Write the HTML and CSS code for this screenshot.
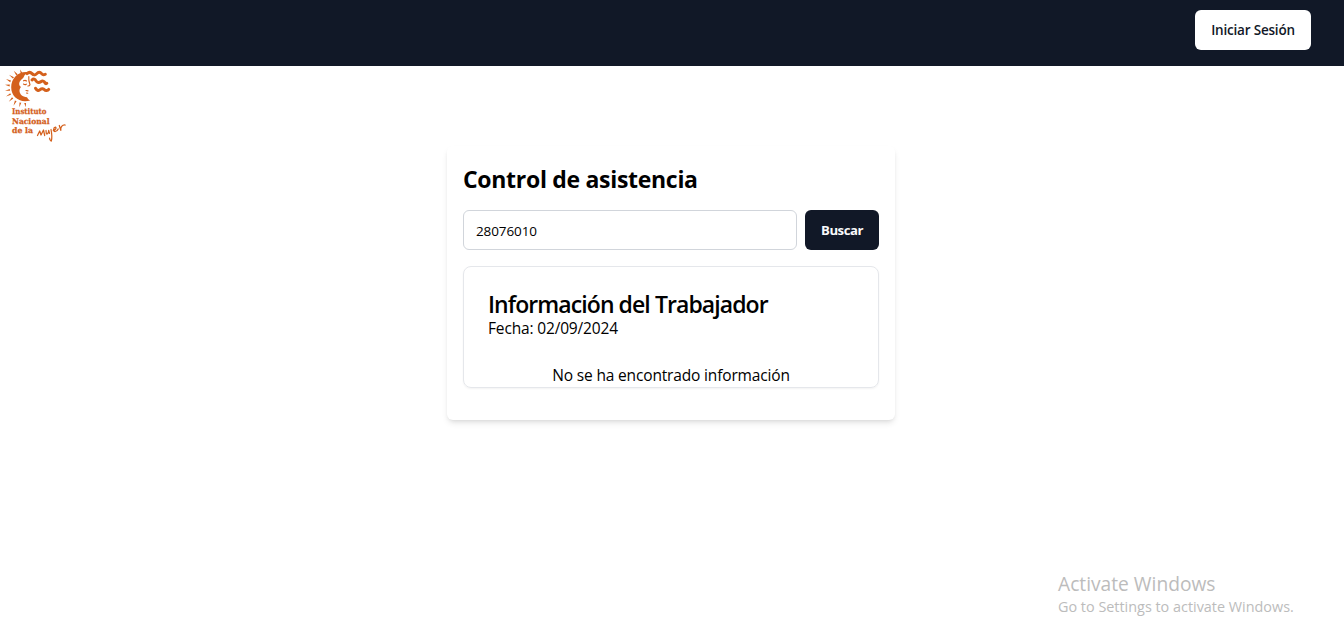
FILE: index.html
```html
<!DOCTYPE html>
<html lang="es">
<head>
<meta charset="utf-8">
<title>Control de asistencia</title>
<link rel="stylesheet" href="styles.css">
</head>
<body>
<header class="topbar"><button class="btn btn-light"><span class="login-label">Iniciar Sesión</span></button></header>
<main class="page">
  <svg class="logo" width="70" height="80" viewBox="0 0 70 80" role="img" aria-label="Instituto Nacional de la Mujer">
    <path fill="#d4601c" d="M20 3.500l2.500 3.500-1.800.6zM13.700 4.800l4 3.500-1.500 1zM9 8.800l5 2.400-1.200 1.400zM6 13l5 1.600-.8 1.600zM5 18.700l4.800-.2-.2 1.900zM5 24.800l4.800-1.800.2 1.800zM6 30.500l4.200-3.300.8 1.600zM8.800 35.700l3.200-4.500 1.300 1.300zM13.500 39.700l1.400-5.200 1.700.8zM19.300 41.300l.2-4.900 1.800.3zM25.800 41.300l-1.600-4.300 1.800-.1z"/>
    <path fill="none" stroke="#d4601c" stroke-linecap="round" stroke-width="3" d="M27 7.600c2-1.800 3.500-1.600 5 0s3.300 1.800 4.800 0 3.300-1.800 4.800 0 2.500 1.300 3.700.6M32 14c1.500-1.600 3-1 4 .9s3.200 2 4.800.8 3.300-.7 4 .8 1.200 1.300 2 .8M35.500 22.300c1.500 2.700 3.400 2.800 4.800 1.300s3.200-1 4.200.2 3.200 1 4.200-.4"/>
    <path fill="#d4601c" d="M29 6.400C19 4.500 11.200 12 11.200 21.300c0 9.500 8.300 16.200 19.100 13.200-1.500-.6-2.600-1.800-3.300-3.200-4.500-.3-7.500-3.200-7.500-6.500 0-1.700.6-2.700 1.500-3.800-2-1.200-2.300-3.800-1.200-5.600 1-2 3.500-2.500 4.200-4.900.4-1.800 2.400-3.200 5-4.100z"/>
    <path fill="none" stroke="#d4601c" stroke-width="1.100" stroke-linecap="round" d="M23.500 14.800c1.200-.7 2.300-.5 3 .2M23.500 18c1 .8 2 .8 2.800.2M28.800 10.500c-.4 3.500.2 5.700 1.200 8.200-.4 1-1.200 1.300-2.100 1.300M26 24.500l2 .4M26.500 27l1.300.2"/>
    <g fill="#d4601c" class="logo-text">
      <text x="12" y="48" textLength="34.500" lengthAdjust="spacingAndGlyphs">Instituto</text>
      <text x="12" y="57.500" textLength="37.500" lengthAdjust="spacingAndGlyphs">Nacional</text>
      <text x="12" y="67" textLength="21" lengthAdjust="spacingAndGlyphs">de la</text>
    </g>
    <path fill="none" stroke="#d4601c" stroke-width="1.250" stroke-linecap="round" stroke-linejoin="round" d="M37.500 69.500l2.200-4.500 1.300 4 2.500-5 1.200 5.500M46 64.500l.3 3.200c1.200 1 2.200-.7 2.400-3.400l.8 3M51 63.500c.9 4.500 1.200 8.500.3 11.700-1-.7-1.800-2-1.800-3.200M53.300 64.500c2.300-.5 3.400-2.800 2.200-3.300-2.200.3-2.800 4.300-.3 4.300 1.500-.2 2.500-1.200 3-2.500M59.300 59.500l1.500 4.800c-.4-3.200 1.200-5.500 4.400-5.300"/>
  </svg>
  <section class="panel">
    <h1 class="panel-title">Control de asistencia</h1>
    <form class="search"><input class="field" type="text" value="28076010" aria-label="Documento"><button class="btn btn-dark" type="button"><span class="search-label">Buscar</span></button></form>
    <article class="card">
      <h2 class="card-title">Información del Trabajador</h2>
      <p class="date">Fecha: 02/09/2024</p>
      <p class="empty"><span>No se ha encontrado información</span></p>
    </article>
  </section>
</main>
<aside class="watermark"><div class="wm-title">Activate Windows</div><div class="wm-text">Go to Settings to activate Windows.</div></aside>
</body>
</html>
```
FILE: styles.css
```css
* { box-sizing: border-box; margin: 0; padding: 0; }
body { height: 628px; overflow: hidden; background: #fff; color: #000; font-family: "Open Sans", "Noto Sans", sans-serif; font-size: 15.5px; line-height: 24px; letter-spacing: -.16px; }
.topbar { height: 66px; background: #111827; display: flex; justify-content: flex-end; align-items: flex-start; padding: 10px 33px 0 0; }
.btn { height: 40px; border: 0; border-radius: 6px; font: 600 13.5px/20px "Open Sans", sans-serif; letter-spacing: -.2px; white-space: nowrap; display: flex; align-items: center; justify-content: center; }
.btn-light { width: 116px; background: #fff; color: #111827; }
.btn-dark { width: 74px; background: #111827; color: #f9fafb; font-size: 13.2px; font-weight: 700; letter-spacing: -.5px; }
.page { display: flex; flex-direction: column; padding-right: 2px; }
.logo { display: block; }
.logo-text { font: 700 7.8px "DejaVu Serif", serif; letter-spacing: 0; stroke: #d4601c; stroke-width: .25px; }
.panel { width: 448px; height: 274px; align-self: center; padding: 16px; border-radius: 6px; background: #fff; box-shadow: 0 4px 6px -1px rgba(0,0,0,.1), 0 2px 4px -2px rgba(0,0,0,.1); }
.panel-title { font-size: 23px; line-height: 32px; font-weight: 700; letter-spacing: -.3px; margin-bottom: 16px; padding-top: 1px; height: 32px; white-space: nowrap; }
.search { display: flex; gap: 8px; margin-bottom: 16px; }
.field { flex: 1; min-width: 0; height: 40px; border: 1px solid #d1d5db; border-radius: 6px; padding: 1px 12px 0; font: 13.5px/20px "Open Sans", sans-serif; letter-spacing: -.1px; outline: none; }
.card { height: 122px; border: 1px solid #e5e7eb; border-radius: 8px; padding: 25px 24px 0; box-shadow: 0 1px 2px rgba(0,0,0,.05); white-space: nowrap; }
.card-title { font-size: 23px; line-height: 24px; font-weight: 600; letter-spacing: -.92px; }
.date { line-height: 24px; margin-bottom: 23px; }
.empty { text-align: center; }
.watermark { position: absolute; left: 1058px; top: 571px; color: #bcbcbc; white-space: nowrap; letter-spacing: 0; }
.wm-title { font-size: 19.2px; line-height: 26px; }
.wm-text { font-size: 14.4px; line-height: 20px; }
```
